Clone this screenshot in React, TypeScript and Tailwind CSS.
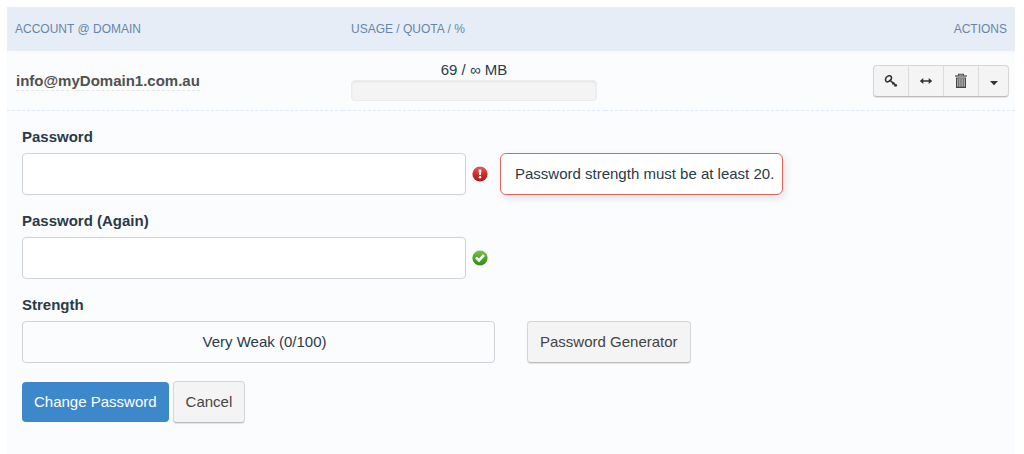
import React, { useState } from "react"

const fieldBox = "h-[42px] rounded border border-[#cfd2d6]"
const greyButton =
  "border border-[#d6d6d6] border-b-[#bcbcbc] bg-[#f4f4f4] text-[#444444] shadow-[0_1px_1px_rgba(0,0,0,0.1)] hover:bg-[#ebebeb]"
const iconButton = "flex items-center justify-center h-[30px] border-r border-[#dcdcdc] hover:bg-[#ebebeb]"

function KeyIcon() {
  return (
    <svg className="w-3.5 h-3.5" viewBox="0 0 14 14" fill="none" stroke="#333333" aria-hidden="true">
      <path d="M1.8 6.9 C0.9 5.2 2.2 2.4 4.8 1.8 C6.9 1.4 8 3 7.3 4.9 C6.3 7.4 2.9 8.8 1.8 6.9 Z" strokeWidth={1.6} />
      <path d="M5.6 6 L12.8 12.2" strokeWidth={1.6} />
      <path d="M8.4 10.4 L10.2 8.4 M10.5 12.4 L12.4 10.2" strokeWidth={1.6} />
    </svg>
  )
}

function ArrowsIcon() {
  return (
    <svg className="w-3.5 h-3.5" viewBox="0 0 14 14" aria-hidden="true">
      <path d="M0.8 7 L4.3 3.9 V6.2 H9.7 V3.9 L13.2 7 L9.7 10.1 V7.8 H4.3 V10.1 Z" fill="#333333" />
    </svg>
  )
}

function TrashIcon() {
  return (
    <svg className="w-4 h-4" viewBox="0 0 16 16" fill="none" stroke="#444444" aria-hidden="true">
      <path d="M2 3 H14" strokeWidth={1.2} />
      <path d="M5.5 2.8 V1.2 H10.5 V2.8" strokeWidth={1.1} />
      <path d="M3.6 5 H12.4 V14.4 H3.6 Z" fill="#c4c4c4" strokeWidth={1.2} />
      <path d="M5.8 6 V14 M8 6 V14 M10.2 6 V14" strokeWidth={0.9} />
    </svg>
  )
}

function CaretIcon() {
  return (
    <svg className="w-2.5 h-1.5 mt-1" viewBox="0 0 10 6" aria-hidden="true">
      <path d="M1 1 H9 L5 5.2 Z" fill="#333333" />
    </svg>
  )
}

function ErrorIcon() {
  return (
    <svg className="w-4 h-4 shrink-0" viewBox="0 0 16 16" role="img" aria-label="Error">
      <defs>
        <linearGradient id="red" x1="0" y1="0" x2="0" y2="1">
          <stop offset="0" stopColor="#e45c58" />
          <stop offset="0.5" stopColor="#d22d2b" />
          <stop offset="1" stopColor="#a81715" />
        </linearGradient>
      </defs>
      <circle cx="8" cy="8" r="7.6" fill="url(#red)" />
      <path d="M6.6 3.6 H9.4 L9 9 H7 Z" fill="#ffffff" />
      <circle cx="8" cy="11.3" r="1.3" fill="#ffffff" />
    </svg>
  )
}

function ValidIcon() {
  return (
    <svg className="w-4 h-4 shrink-0" viewBox="0 0 16 16" role="img" aria-label="Valid">
      <defs>
        <linearGradient id="green" x1="0" y1="0" x2="0" y2="1">
          <stop offset="0" stopColor="#7cc246" />
          <stop offset="0.5" stopColor="#4fa52b" />
          <stop offset="1" stopColor="#3a8a1e" />
        </linearGradient>
      </defs>
      <circle cx="8" cy="8" r="7.6" fill="url(#green)" />
      <path d="M4 7.4 L7 10.4 L12 5" fill="none" stroke="#ffffff" strokeWidth={2.6} />
    </svg>
  )
}

export default function App() {
  const [password, setPassword] = useState("")
  const [confirm, setConfirm] = useState("")

  return (
    <div className="flex flex-col min-h-screen pt-[7px] pl-[7px] pr-[9px] bg-white font-['Liberation_Sans',Arial,sans-serif] text-[15px] leading-5 text-[#293a4a]">
      <div className="grow bg-[#fbfcfe]">
        <table className="w-full table-fixed border-collapse">
          <thead>
            <tr className="h-11 bg-[#e7edf7] text-xs text-[#6785a8]">
              <th className="w-1/3 px-2 text-left font-normal">ACCOUNT @ DOMAIN</th>
              <th className="w-[26%] px-2 text-left font-normal">USAGE / QUOTA / %</th>
              <th className="px-2 text-right font-normal">ACTIONS</th>
            </tr>
          </thead>
          <tbody>
            <tr className="border-b border-dashed border-[#dfe9f3]">
              <td className="px-[9px] pt-[9px] pb-2">
                <span className="pb-px border-b border-dashed border-[#e2e6ea] font-bold text-[#505050]">
                  info@myDomain1.com.au
                </span>
              </td>
              <td className="px-2 py-[9px]">
                <div className="text-center">69 / ∞ MB</div>
                <div className="h-[21px] rounded border border-[#ececec] bg-[#f4f4f4] shadow-[inset_0_1px_2px_rgba(0,0,0,0.07)]" />
              </td>
              <td className="pl-2 pr-1.5">
                <div className={`flex w-fit ml-auto rounded ${greyButton}`}>
                  <button type="button" aria-label="Change password" className={`w-[35px] ${iconButton}`}>
                    <KeyIcon />
                  </button>
                  <button type="button" aria-label="Change quota" className={`w-[35px] ${iconButton}`}>
                    <ArrowsIcon />
                  </button>
                  <button type="button" aria-label="Delete" className={`w-[35px] ${iconButton}`}>
                    <TrashIcon />
                  </button>
                  <button
                    type="button"
                    aria-label="More"
                    className="flex items-center justify-center w-[29px] h-[30px] hover:bg-[#ebebeb]"
                  >
                    <CaretIcon />
                  </button>
                </div>
              </td>
            </tr>
          </tbody>
        </table>

        <form className="flex flex-col gap-4 px-[15px] py-4" onSubmit={(e) => e.preventDefault()}>
          <div>
            <label htmlFor="password" className="block mb-1.5 font-bold">
              Password
            </label>
            <div className="flex items-center">
              <input
                id="password"
                type="password"
                value={password}
                onChange={(e) => setPassword(e.target.value)}
                className={`w-full max-w-[444px] px-3 bg-white ${fieldBox}`}
              />
              <div className="flex items-center gap-3 ml-1.5">
                <ErrorIcon />
                <div className="py-2.5 pl-3.5 pr-2 rounded-md border border-[#e0655c] bg-white whitespace-nowrap shadow-[2px_3px_8px_rgba(0,0,0,0.1)]">
                  Password strength must be at least 20.
                </div>
              </div>
            </div>
          </div>

          <div>
            <label htmlFor="confirm" className="block mb-1.5 font-bold">
              Password (Again)
            </label>
            <div className="flex items-center gap-1.5">
              <input
                id="confirm"
                type="password"
                value={confirm}
                onChange={(e) => setConfirm(e.target.value)}
                className={`w-full max-w-[444px] px-3 bg-white ${fieldBox}`}
              />
              <ValidIcon />
            </div>
          </div>

          <div>
            <div className="mb-1.5 font-bold">Strength</div>
            <div className="flex items-center gap-8">
              <div className={`flex items-center justify-center w-full max-w-[473px] pl-3 ${fieldBox}`}>
                <span>Very Weak (0/100)</span>
              </div>
              <button type="button" className={`h-[42px] px-3 rounded-sm whitespace-nowrap ${greyButton}`}>
                Password Generator
              </button>
            </div>
          </div>

          <div className="flex items-center gap-1 pt-0.5">
            <button type="submit" className="h-10 px-3 rounded-sm bg-[#3d87cb] text-white hover:bg-[#3277b8]">
              Change Password
            </button>
            <button type="button" className={`h-[42px] px-3 rounded-sm ${greyButton}`}>
              Cancel
            </button>
          </div>
        </form>
      </div>
    </div>
  )
}
